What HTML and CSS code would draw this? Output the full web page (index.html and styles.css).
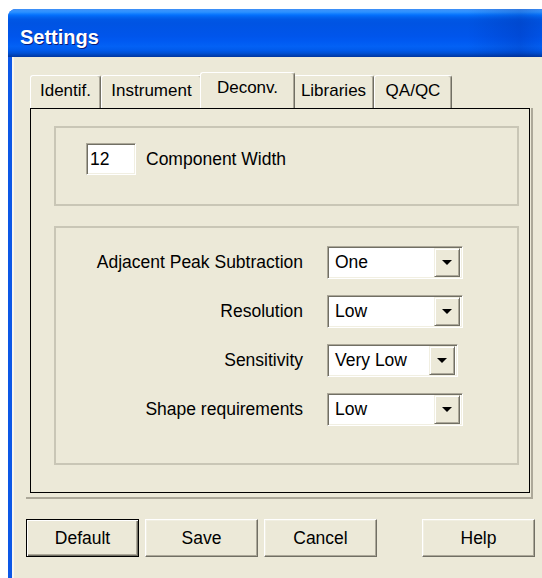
FILE: index.html
```html
<!DOCTYPE html>
<html lang="en">
<head>
<meta charset="utf-8">
<title>Settings</title>
<link rel="stylesheet" href="styles.css">
</head>
<body>
<div class="window">
  <div class="titlebar"><span class="title">Settings</span></div>
  <div class="client">
    <div class="tabs">
      <div class="tab tab-identif">Identif.</div>
      <div class="tab tab-instrument">Instrument</div>
      <div class="tab tab-deconv is-active">Deconv.</div>
      <div class="tab tab-libraries">Libraries</div>
      <div class="tab tab-qaqc">QA/QC</div>
    </div>
    <div class="panel-frame">
      <div class="panel">
        <div class="group group-width">
          <div class="edit">12</div>
          <span class="inline-label">Component Width</span>
        </div>
        <div class="group group-peaks">
          <span class="field-label">Adjacent Peak Subtraction</span>
          <div class="combo"><span class="combo-value">One</span><span class="combo-btn"><span class="combo-arrow"></span></span></div>
          <span class="field-label">Resolution</span>
          <div class="combo"><span class="combo-value">Low</span><span class="combo-btn"><span class="combo-arrow"></span></span></div>
          <span class="field-label">Sensitivity</span>
          <div class="combo combo-narrow"><span class="combo-value">Very Low</span><span class="combo-btn"><span class="combo-arrow"></span></span></div>
          <span class="field-label">Shape requirements</span>
          <div class="combo"><span class="combo-value">Low</span><span class="combo-btn"><span class="combo-arrow"></span></span></div>
        </div>
      </div>
    </div>
    <div class="actions">
      <button class="btn btn-default">Default</button>
      <button class="btn">Save</button>
      <button class="btn">Cancel</button>
      <button class="btn btn-help">Help</button>
    </div>
  </div>
</div>
</body>
</html>
```
FILE: styles.css
```css
* { box-sizing: border-box; }

html, body { margin: 0; }

body {
  width: 542px;
  height: 578px;
  overflow: hidden;
  background: #fff;
  font-family: "Liberation Sans", Arial, sans-serif;
  color: #000;
}

/* window frame */
.window {
  margin: 9px 0 0 8px;
  height: 569px;
  background: #0c57e6;
  border-radius: 8px 0 0 0;
  overflow: hidden;
  display: flex;
  flex-direction: column;
}

.titlebar {
  flex: none;
  height: 48px;
  padding: 16px 0 0 12px;
  background:
    linear-gradient(to right, rgba(0, 20, 120, 0) 86%, rgba(0, 20, 120, 0.18) 96%, rgba(0, 20, 120, 0.05) 100%),
    linear-gradient(to bottom,
      #3d8ef5 0%, #3593ff 4%, #288eff 7%, #127dff 10%, #036ffc 13%,
      #0262ee 17%, #0057e5 22%, #0054e3 30%, #0055eb 56%, #005af2 68%,
      #0361f5 78%, #005aeb 86%, #0050d4 92%, #0043b8 96%, #0036a0 100%);
}

.title {
  display: block;
  font: bold 20px/24px "Liberation Sans", Arial, sans-serif;
  color: #fff;
  text-shadow: 1px 1px 0 #0a1c7a;
}

.client {
  flex: 1;
  margin-left: 4px;
  border-left: 2px solid #f6f5f0;
  background: #ece9d8;
  padding: 15px 0 0 12px;
}

/* tab strip */
.tabs {
  display: flex;
  align-items: flex-end;
  height: 36px;
  padding-left: 4px;
}

.tab {
  height: 33px;
  padding-top: 5px;
  line-height: 20px;
  font-size: 17px;
  text-align: center;
  white-space: nowrap;
  background: #ece9d8;
  border-top: 1px solid #fff;
  border-left: 1px solid #fff;
  border-right: 1px solid #716f64;
  box-shadow: inset -1px 0 #aca899;
  border-radius: 3px 3px 0 0;
}

.tab-identif { width: 71px; }
.tab-instrument { width: 101px; }
.tab-deconv { width: 95px; }
.tab-libraries { width: 81px; }
.tab-qaqc { width: 78px; }

.tab.is-active {
  position: relative;
  z-index: 1;
  height: 36px;
  margin: 0 -2px;
}

/* tab page */
.panel-frame {
  width: 507px;
  padding: 0 1px 4px 4px;
  border-right: 2px solid #aca899;
  border-bottom: 2px solid #aca899;
}

.panel {
  height: 385px;
  border: 1px solid #000;
  padding: 17px 10px 0 23px;
}

.group {
  border: 2px solid #c9c6b6;
}

.group-width {
  height: 80px;
  display: flex;
  align-items: flex-start;
  gap: 10px;
  padding: 15px 0 0 30px;
}

.edit {
  width: 50px;
  height: 32px;
  background: #fff;
  border: 1px solid;
  border-color: #aca899 #fff #fff #aca899;
  box-shadow: inset 1px 1px #716f64, inset -1px -1px #f1efe2;
  padding-left: 3px;
  font-size: 17.5px;
  line-height: 30px;
}

.inline-label {
  font-size: 17.5px;
  line-height: 32px;
}

.group-peaks {
  margin-top: 20px;
  height: 239px;
  display: grid;
  grid-template-columns: 247px max-content;
  grid-auto-rows: 33px;
  column-gap: 24px;
  row-gap: 16px;
  align-content: start;
  padding-top: 18px;
}

.field-label {
  text-align: right;
  font-size: 17.5px;
  line-height: 33px;
  white-space: nowrap;
}

/* drop-down list */
.combo {
  width: 136px;
  height: 33px;
  display: flex;
  align-items: center;
  background: #fff;
  border: 1px solid;
  border-color: #aca899 #fff #fff #aca899;
  box-shadow: inset 1px 1px #716f64, inset -1px -1px #f1efe2;
  padding: 1px 2px 1px 7px;
}

.combo-narrow { width: 131px; }

.combo-value {
  flex: 1;
  font-size: 17.5px;
  white-space: nowrap;
}

.combo-btn {
  flex: none;
  width: 26px;
  height: 100%;
  display: flex;
  align-items: center;
  justify-content: center;
  background: #ece9d8;
  border: 1px solid;
  border-color: #f1efe2 #716f64 #716f64 #f1efe2;
  box-shadow: inset 1px 1px #fff, inset -1px -1px #aca899;
}

.combo-arrow {
  width: 0;
  height: 0;
  border-left: 5px solid transparent;
  border-right: 5px solid transparent;
  border-top: 5px solid #000;
}

/* dialog buttons */
.actions {
  display: flex;
  gap: 6px;
  margin-top: 20px;
}

.btn {
  width: 113px;
  height: 38px;
  padding: 0;
  font-family: "Liberation Sans", Arial, sans-serif;
  font-size: 17.5px;
  color: #000;
  background: #ece9d8;
  border: 1px solid;
  border-color: #fff #716f64 #716f64 #fff;
  box-shadow: inset -1px -1px #aca899, inset 1px 1px #f1efe2;
  border-radius: 0;
}

.btn-default {
  border: 1px solid #000;
  box-shadow: inset 1px 1px #fff, inset -1px -1px #716f64, inset -2px -2px #aca899;
}

.btn-help { margin-left: 39px; }
```
